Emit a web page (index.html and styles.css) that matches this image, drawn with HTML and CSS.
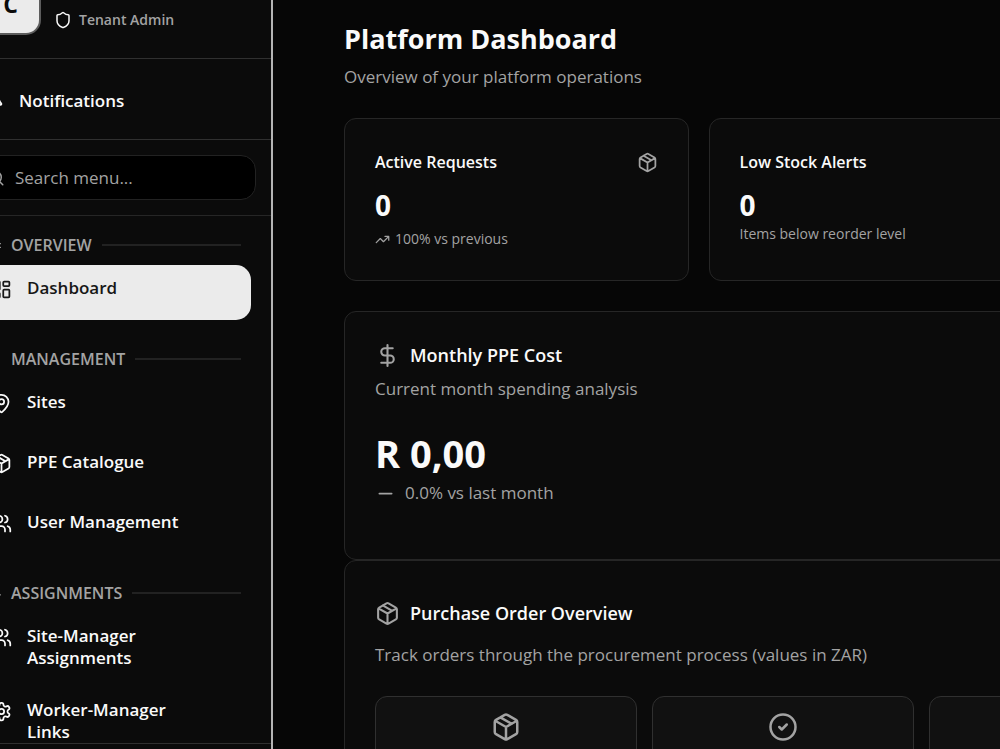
FILE: index.html
```html
<!DOCTYPE html>
<html lang="en">
<head>
  <meta charset="UTF-8" />
  <meta name="viewport" content="width=device-width, initial-scale=1" />
  <title>Platform Dashboard</title>
  <link rel="stylesheet" href="styles.css">
</head>
<body>
  <!-- Shared icons -->
  <svg class="sprite" aria-hidden="true">
    <symbol id="package" viewBox="0 0 24 24"><path d="m7.5 4.27 9 5.15M21 8a2 2 0 0 0-1-1.73l-7-4a2 2 0 0 0-2 0l-7 4A2 2 0 0 0 3 8v8a2 2 0 0 0 1 1.73l7 4a2 2 0 0 0 2 0l7-4A2 2 0 0 0 21 16ZM3.3 7l8.7 5 8.7-5M12 22V12" /></symbol>
    <symbol id="users" viewBox="0 0 24 24"><path d="M16 21v-2a4 4 0 0 0-4-4H6a4 4 0 0 0-4 4v2M22 21v-2a4 4 0 0 0-3-3.87M16 3.13a4 4 0 0 1 0 7.75" /><circle cx="9" cy="7" r="4" /></symbol>
  </svg>

  <div class="layout">
    <aside class="sidebar">
      <div class="profile">
        <div class="avatar">C</div>
        <div class="role">
          <svg class="icon icon-sm" viewBox="0 0 24 24"><path d="M20 13c0 5-3.5 7.5-7.66 8.95a1 1 0 0 1-.67-.01C7.5 20.5 4 18 4 13V6a1 1 0 0 1 1-1c2 0 4.5-1.2 6.24-2.72a1.17 1.17 0 0 1 1.52 0C14.51 3.81 17 5 19 5a1 1 0 0 1 1 1z" /></svg>
          <span>Tenant Admin</span>
        </div>
      </div>

      <button class="notifications" type="button">
        <svg class="icon" viewBox="0 0 24 24"><path d="M10.3 21a2 2 0 0 0 3.4 0M3.3 15.3A1 1 0 0 0 4 17h16a1 1 0 0 0 .7-1.7C19.4 14 18 12.5 18 8A6 6 0 0 0 6 8c0 4.500-1.400 6-2.700 7.300" /></svg>
        Notifications
      </button>

      <div class="search">
        <label class="search-box">
          <svg class="icon icon-sm" viewBox="0 0 24 24"><circle cx="11" cy="11" r="8" /><path d="m21 21-4.3-4.3" /></svg>
          <input type="text" placeholder="Search menu..." aria-label="Search menu" />
        </label>
      </div>

      <nav class="menu">
        <section class="menu-group">
          <h2 class="menu-title"><svg class="icon icon-xs" viewBox="0 0 24 24"><path d="M3 9h20M3 15h20" /></svg>OVERVIEW</h2>
          <a class="menu-item active" href="#">
            <svg class="icon" viewBox="0 0 24 24"><rect x="3" y="3" width="7" height="9" rx="1" /><rect x="14" y="3" width="7" height="5" rx="1" /><rect x="14" y="12" width="7" height="9" rx="1" /><rect x="3" y="16" width="7" height="5" rx="1" /></svg>
            <span>Dashboard</span>
          </a>
        </section>

        <section class="menu-group">
          <h2 class="menu-title"><svg class="icon icon-xs" viewBox="0 0 24 24"><path d="M4 4v16M12 4v16" /></svg>MANAGEMENT</h2>
          <a class="menu-item" href="#">
            <svg class="icon" viewBox="0 0 24 24"><path d="M20 10c0 5-5.54 10.19-7.4 11.8a1 1 0 0 1-1.2 0C9.54 20.19 4 15 4 10a8 8 0 0 1 16 0" /><circle cx="12" cy="10" r="3" /></svg>
            <span>Sites</span>
          </a>
          <a class="menu-item" href="#">
            <svg class="icon" viewBox="0 0 24 24"><use href="#package" /></svg>
            <span>PPE Catalogue</span>
          </a>
          <a class="menu-item" href="#">
            <svg class="icon" viewBox="0 0 24 24"><use href="#users" /></svg>
            <span>User Management</span>
          </a>
        </section>

        <section class="menu-group">
          <h2 class="menu-title"><svg class="icon icon-xs" viewBox="0 0 24 24"><path d="M4 14h19M8 18l-4-4 4-4" /></svg>ASSIGNMENTS</h2>
          <a class="menu-item" href="#">
            <svg class="icon" viewBox="0 0 24 24"><use href="#users" /></svg>
            <span>Site-Manager Assignments</span>
          </a>
          <a class="menu-item" href="#">
            <svg class="icon" viewBox="0 0 24 24"><path d="M12.22 2h-.44a2 2 0 0 0-2 2v.18a2 2 0 0 1-1 1.73l-.43.25a2 2 0 0 1-2 0l-.15-.08a2 2 0 0 0-2.73.73l-.22.38a2 2 0 0 0 .73 2.73l.15.1a2 2 0 0 1 1 1.72v.51a2 2 0 0 1-1 1.74l-.15.09a2 2 0 0 0-.73 2.73l.22.38a2 2 0 0 0 2.73.73l.15-.08a2 2 0 0 1 2 0l.43.25a2 2 0 0 1 1 1.73V20a2 2 0 0 0 2 2h.44a2 2 0 0 0 2-2v-.18a2 2 0 0 1 1-1.73l.43-.25a2 2 0 0 1 2 0l.15.08a2 2 0 0 0 2.73-.73l.22-.39a2 2 0 0 0-.73-2.73l-.15-.08a2 2 0 0 1-1-1.74v-.5a2 2 0 0 1 1-1.74l.15-.09a2 2 0 0 0 .73-2.73l-.22-.38a2 2 0 0 0-2.73-.73l-.15.08a2 2 0 0 1-2 0l-.43-.25a2 2 0 0 1-1-1.73V4a2 2 0 0 0-2-2z" /><circle cx="12" cy="12" r="3" /></svg>
            <span>Worker-Manager Links</span>
          </a>
        </section>
      </nav>
      <div class="sidebar-footer"></div>
    </aside>

    <main class="main">
      <div class="content">
        <header class="page-header">
          <h1>Platform Dashboard</h1>
          <p>Overview of your platform operations</p>
        </header>

        <div class="stats">
          <section class="card stat">
            <div class="stat-head">
              <h3>Active Requests</h3>
              <svg class="icon" viewBox="0 0 24 24"><use href="#package" /></svg>
            </div>
            <div class="stat-value">0</div>
            <p class="stat-note trend">
              <svg class="icon icon-xs" viewBox="0 0 24 24"><path d="M22 7 13.5 15.5 8.5 10.5 2 17M16 7h6v6" /></svg>
              100% vs previous
            </p>
          </section>
          <section class="card stat">
            <div class="stat-head">
              <h3>Low Stock Alerts</h3>
            </div>
            <div class="stat-value">0</div>
            <p class="stat-note">Items below reorder level</p>
          </section>
        </div>

        <section class="card cost">
          <h2 class="card-title">
            <svg class="icon icon-lg" viewBox="0 0 24 24"><path d="M12 2v20M17 5H9.5a3.5 3.5 0 0 0 0 7h5a3.5 3.5 0 0 1 0 7H6" /></svg>
            Monthly PPE Cost
          </h2>
          <p class="muted">Current month spending analysis</p>
          <div class="amount">R 0,00</div>
          <p class="muted change">
            <svg class="icon" viewBox="0 0 24 24"><path d="M5 12h14" /></svg>
            0.0% vs last month
          </p>
        </section>

        <section class="card orders">
          <h2 class="card-title">
            <svg class="icon icon-lg" viewBox="0 0 24 24"><use href="#package" /></svg>
            Purchase Order Overview
          </h2>
          <p class="muted">Track orders through the procurement process (values in ZAR)</p>
          <div class="stages">
            <div class="stage"><svg class="icon icon-xl" viewBox="0 0 24 24"><use href="#package" /></svg></div>
            <div class="stage"><svg class="icon icon-xl" viewBox="0 0 24 24"><circle cx="12" cy="12" r="10" /><path d="m9 12 2 2 4-4" /></svg></div>
            <div class="stage"></div>
          </div>
        </section>
      </div>
    </main>
  </div>
</body>
</html>
```

FILE: styles.css
```css
* {
  box-sizing: border-box;
}
body {
  margin: 0;
  font-family: 'Segoe UI', 'Open Sans', 'Noto Sans', sans-serif;
  font-size: 17px;
  line-height: 22px;
  background: #060606;
  color: #fafafa;
  overflow: hidden;
}
h1, h2, h3, p {
  margin: 0;
}
.sprite {
  display: none;
}
.layout {
  display: flex;
  height: 100vh;
}
.icon {
  width: 21px;
  height: 21px;
  flex: none;
  fill: none;
  stroke: currentColor;
  stroke-width: 2;
  stroke-linecap: round;
  stroke-linejoin: round;
}
.icon-xs {
  width: 15px;
  height: 15px;
}
.icon-sm {
  width: 18px;
  height: 18px;
}
.icon-lg {
  width: 25px;
  height: 25px;
}
.icon-xl {
  width: 30px;
  height: 30px;
}

/* Sidebar */
.sidebar {
  display: flex;
  flex-direction: column;
  flex: none;
  width: 312px;
  margin: -40px 0 0 -39px;
  background: #0b0b0b;
  border-right: 2px solid #b4b4b4;
}
.profile {
  display: flex;
  align-items: flex-end;
  gap: 13px;
  padding: 14px 20px 23px 19px;
  border-bottom: 1px solid #303030;
}
.avatar {
  width: 61px;
  height: 61px;
  border: 2px solid #5c5c5c;
  border-radius: 15px;
  background: #ebebeb;
  color: #0b0b0b;
  font-size: 23px;
  font-weight: 700;
  line-height: 57px;
  text-align: center;
}
.role {
  display: flex;
  align-items: center;
  gap: 7px;
  padding-bottom: 4px;
  font-size: 14px;
  font-weight: 600;
}
.role span {
  color: #a3a3a3;
}
.notifications {
  display: flex;
  align-items: center;
  gap: 15px;
  height: 81px;
  padding: 3px 22px 0;
  border: none;
  border-bottom: 1px solid #303030;
  background: none;
  color: #fafafa;
  font: inherit;
  font-weight: 600;
  text-align: left;
}
.search {
  padding: 15px;
  border-bottom: 1px solid #262626;
}
.search-box {
  display: flex;
  align-items: center;
  gap: 10px;
  height: 45px;
  padding: 0 10px;
  border: 1px solid #222222;
  border-radius: 15px;
  background: #000000;
  color: #a3a3a3;
}
.search-box input {
  flex: 1;
  min-width: 0;
  padding: 0;
  border: none;
  outline: none;
  background: none;
  color: inherit;
  font: inherit;
}
.search-box input::placeholder {
  color: #a3a3a3;
}
.menu {
  display: flex;
  flex: 1;
  flex-direction: column;
  gap: 24px;
  min-height: 0;
  padding: 14px 20px 0 15px;
  overflow: hidden;
}
.menu-group {
  display: flex;
  flex-direction: column;
  gap: 5px;
}
.menu-title {
  display: flex;
  align-items: center;
  gap: 10px;
  height: 30px;
  padding: 0 10px;
  color: #a3a3a3;
  font-size: 16px;
  font-weight: 600;
}
.menu-title::after {
  content: '';
  flex: 1;
  height: 2px;
  background: #222222;
}
.menu-item {
  display: flex;
  gap: 15px;
  min-height: 55px;
  padding: 12px 60px 13px 15px;
  border-radius: 15px;
  color: #fafafa;
  font-weight: 600;
  text-decoration: none;
}
.menu-item .icon {
  margin-top: 2px;
}
.menu-item.active {
  background: #ebebeb;
  color: #171717;
}
.sidebar-footer {
  height: 6px;
  border-top: 1px solid #303030;
}

/* Main area */
.main {
  flex: 1;
  min-width: 0;
  padding: 20px 0 0 71px;
  overflow: hidden;
}
.content {
  min-width: 1438px;
}
.page-header {
  margin-bottom: 30px;
}
.page-header h1 {
  font-size: 27px;
  line-height: 38px;
}
.page-header p {
  padding-top: 8px;
  color: #a3a3a3;
}
.card {
  padding: 30px;
  border: 1px solid #262626;
  border-radius: 12px;
  background: #0b0b0b;
}
.muted {
  color: #a3a3a3;
}
.stats {
  display: grid;
  grid-template-columns: repeat(4, 1fr);
  gap: 20px;
  margin-bottom: 30px;
}
.stat {
  min-height: 162px;
}
.stat-head {
  display: flex;
  align-items: center;
  justify-content: space-between;
  height: 26px;
}
.stat-head h3 {
  font-size: 16px;
  font-weight: 600;
}
.stat-head .icon,
.stage .icon,
.card-title .icon {
  color: #a3a3a3;
}
.stat-value {
  padding: 14px 0 2px;
  font-size: 28px;
  font-weight: 700;
  line-height: 32px;
}
.stat-note {
  color: #a3a3a3;
  font-size: 14px;
}
.trend {
  display: flex;
  align-items: center;
  gap: 5px;
  padding-top: 5px;
}
.cost {
  min-height: 249px;
}
.card-title {
  display: flex;
  align-items: center;
  gap: 10px;
  height: 26px;
  font-size: 18px;
  font-weight: 600;
}
.card-title + .muted {
  padding-top: 10px;
}
.amount {
  padding-top: 30px;
  font-size: 38px;
  font-weight: 700;
  line-height: 46px;
}
.change {
  display: flex;
  align-items: center;
  gap: 9px;
  padding-top: 6px;
}
.orders {
  padding: 39px 36px 30px 30px;
}
.orders .card-title + .muted {
  padding-top: 18px;
}
.stages {
  display: grid;
  grid-template-columns: repeat(5, 1fr);
  gap: 15px;
  padding-top: 30px;
}
.stage {
  display: flex;
  justify-content: center;
  min-height: 150px;
  padding: 15px;
  border: 1px solid #303030;
  border-radius: 12px;
  background: #111111;
}
```
